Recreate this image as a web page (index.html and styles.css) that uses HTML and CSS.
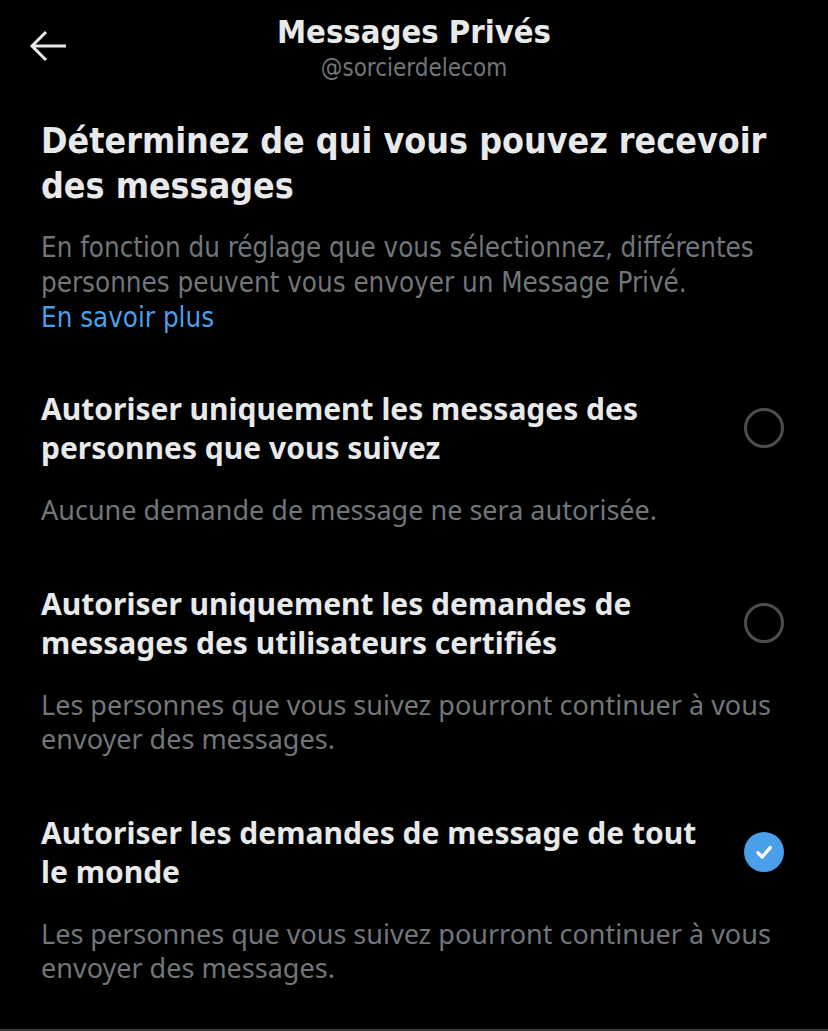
FILE: index.html
```html
<!DOCTYPE html>
<html lang="fr">

<head>
    <meta charset="UTF-8">
    <meta name="viewport" content="width=device-width, initial-scale=1.0">
    <title>Messages Privés</title>
    <link rel="stylesheet" href="styles.css">
</head>

<body>

    <!-- En-tête -->
    <header class="topbar">
        <button class="back" aria-label="Retour">
            <svg viewBox="0 0 40 40" width="40" height="40">
                <path d="M38 20H5M18 6L4 20l14 14" fill="none" stroke="#e7e9ea" stroke-width="3" />
            </svg>
        </button>
        <div class="title">
            <h1>Messages Privés</h1>
            <span class="handle">@sorcierdelecom</span>
        </div>
    </header>

    <main class="content">
        <section class="intro">
            <h2>Déterminez de qui vous pouvez recevoir des messages</h2>
            <p>En fonction du réglage que vous sélectionnez, différentes personnes peuvent vous envoyer un Message Privé.
                <a href="#">En savoir plus</a>
            </p>
        </section>

        <!-- Options -->
        <div class="options">
            <div class="option">
                <div class="option-row">
                    <h3>Autoriser uniquement les messages des personnes que vous suivez</h3>
                    <span class="radio"></span>
                </div>
                <p class="hint">Aucune demande de message ne sera autorisée.</p>
            </div>

            <div class="option">
                <div class="option-row">
                    <h3>Autoriser uniquement les demandes de messages des utilisateurs certifiés</h3>
                    <span class="radio"></span>
                </div>
                <p class="hint">Les personnes que vous suivez pourront continuer à vous envoyer des messages.</p>
            </div>

            <div class="option">
                <div class="option-row">
                    <h3>Autoriser les demandes de message de tout le monde</h3>
                    <span class="radio checked">
                        <svg viewBox="0 0 24 24" width="26" height="26">
                            <path d="M6.5 12.8l3.8 3.8 7.4-8.6" fill="none" stroke="#fff" stroke-width="3.2" stroke-linecap="round" stroke-linejoin="round" />
                        </svg>
                    </span>
                </div>
                <p class="hint">Les personnes que vous suivez pourront continuer à vous envoyer des messages.</p>
            </div>
        </div>
    </main>

</body>

</html>
```

FILE: styles.css
```css
/* Styles généraux */
body {
    margin: 0;
    background-color: #000;
    color: #e7e9ea;
    font-family: "Noto Sans", sans-serif;
    height: 1031px;
    border-bottom: 2px solid #3a3a3a;
    box-sizing: border-box;
}

/* En-tête */
.topbar {
    position: relative;
    display: flex;
    justify-content: center;
    padding-top: 13px;
    height: 100px;
    box-sizing: border-box;
}

.back {
    position: absolute;
    left: 28px;
    top: 26px;
    background: none;
    border: none;
    padding: 0;
    cursor: pointer;
}

.back svg {
    display: block;
}

.title {
    display: flex;
    flex-direction: column;
    align-items: center;
    font-family: "DejaVu Sans Condensed", "DejaVu Sans", sans-serif;
}

.title h1 {
    margin: 0;
    font-size: 32.5px;
    line-height: 38px;
    font-weight: bold;
}

.handle {
    font-size: 24px;
    line-height: 34px;
    color: #71767b;
}

/* Contenu */
.content {
    padding: 0 44px 0 41px;
}

.intro h2 {
    margin: 18px 0 0;
    font-family: "DejaVu Sans Condensed", "DejaVu Sans", sans-serif;
    font-size: 35.5px;
    line-height: 45px;
    font-weight: bold;
}

.intro p {
    margin: 22px 0 0;
    font-family: "DejaVu Sans Condensed", "DejaVu Sans", sans-serif;
    font-size: 27.5px;
    line-height: 35px;
    color: #71767b;
}

.intro a {
    display: block;
    color: #4a9fe8;
    text-decoration: none;
}

.options {
    margin-top: 54px;
    display: flex;
    flex-direction: column;
    gap: 56px;
}

.option-row {
    display: flex;
    align-items: center;
    justify-content: space-between;
    gap: 30px;
}

.option h3 {
    margin: 0;
    font-size: 30px;
    line-height: 39px;
    font-weight: bold;
}

.hint {
    margin: 26px 0 0;
    font-size: 27px;
    line-height: 34.5px;
    color: #71767b;
}

.radio {
    flex: none;
    width: 34px;
    height: 34px;
    border: 3px solid #4d4d4d;
    border-radius: 50%;
    display: flex;
    align-items: center;
    justify-content: center;
}

.radio.checked {
    width: 40px;
    height: 40px;
    border: none;
    background-color: #4a9eea;
}
```
